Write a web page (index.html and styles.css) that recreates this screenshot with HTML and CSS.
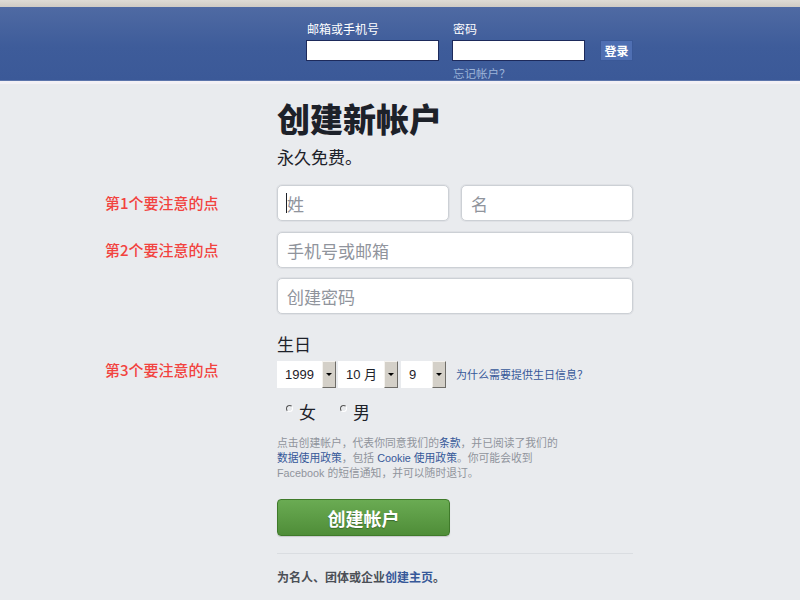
FILE: index.html
```html
<!DOCTYPE html>
<html lang="zh-CN">
<head>
<meta charset="utf-8">
<title>创建新帐户</title>
<link rel="stylesheet" href="styles.css">
</head>
<body>
<div class="topstrip"></div>
<header class="header">
  <div class="login">
    <div class="login-col">
      <label class="login-label">邮箱或手机号</label>
      <input class="login-input" type="text">
    </div>
    <div class="login-col">
      <label class="login-label">密码</label>
      <input class="login-input" type="password">
      <a class="forgot">忘记帐户？</a>
    </div>
    <button class="login-btn">登录</button>
  </div>
</header>
<div class="band"></div>
<main class="main">
  <div class="row">
    <div class="note"></div>
    <div class="content">
      <h1 class="title">创建新帐户</h1>
      <p class="subtitle">永久免费。</p>
    </div>
  </div>
  <div class="row row-name">
    <div class="note">第1个要注意的点</div>
    <div class="content names">
      <div class="field-wrap">
        <input class="field half" type="text" placeholder="姓">
        <span class="caret"></span>
      </div>
      <input class="field half" type="text" placeholder="名">
    </div>
  </div>
  <div class="row row-phone">
    <div class="note">第2个要注意的点</div>
    <div class="content">
      <input class="field" type="text" placeholder="手机号或邮箱">
    </div>
  </div>
  <div class="row row-pass">
    <div class="note"></div>
    <div class="content">
      <input class="field" type="password" placeholder="创建密码">
    </div>
  </div>
  <div class="row row-bday">
    <div class="note"></div>
    <div class="content bday-title">生日</div>
  </div>
  <div class="row row-selects">
    <div class="note note-sel">第3个要注意的点</div>
    <div class="content selects">
      <div class="sel sel-year"><span class="sel-text">1999</span><span class="sel-btn"><span class="tri"></span></span></div>
      <div class="sel sel-month"><span class="sel-text">10 月</span><span class="sel-btn"><span class="tri"></span></span></div>
      <div class="sel sel-day"><span class="sel-text">9</span><span class="sel-btn"><span class="tri"></span></span></div>
      <a class="why">为什么需要提供生日信息？</a>
    </div>
  </div>
  <div class="row row-radio">
    <div class="note"></div>
    <div class="content radios">
      <span class="radio-item"><span class="radio"></span>女</span>
      <span class="radio-item"><span class="radio"></span>男</span>
    </div>
  </div>
  <div class="row row-legal">
    <div class="note"></div>
    <div class="content legal">点击创建帐户，代表你同意我们的<a>条款</a>，并已阅读了我们的<br><a>数据使用政策</a>，包括 <a>Cookie 使用政策</a>。你可能会收到<br>Facebook 的短信通知，并可以随时退订。</div>
  </div>
  <div class="row row-btn">
    <div class="note"></div>
    <div class="content"><button class="create">创建帐户</button></div>
  </div>
  <div class="row row-div">
    <div class="note"></div>
    <div class="content divider"></div>
  </div>
  <div class="row row-foot">
    <div class="note"></div>
    <div class="content foot">为名人、团体或企业<a>创建主页</a>。</div>
  </div>
</main>
</body>
</html>
```

FILE: styles.css
```css
* { box-sizing: border-box; }
html, body {
  margin: 0;
  padding: 0;
  background: #e9ebee;
  font-family: "Liberation Sans", "Noto Sans CJK SC", sans-serif;
  color: #1d2129;
}
.topstrip {
  height: 7px;
  background: linear-gradient(#dedbd5, #cfcbc4);
}
.header {
  height: 74px;
  background: linear-gradient(#4f6aa3, #3e5c9a 55%, #3b5998);
  border-bottom: 1px solid #5b74aa;
}
.band {
  height: 3px;
  background: #f3f1f5;
}
.login {
  display: flex;
  align-items: flex-start;
  padding: 14px 0 0 306px;
}
.login-col {
  display: flex;
  flex-direction: column;
  width: 133px;
  margin-right: 13px;
}
.login-col + .login-col { margin-right: 15px; }
.login-label {
  font-family: "Noto Sans CJK SC", sans-serif;
  font-size: 12px;
  line-height: 16px;
  color: #fff;
  padding-left: 1px;
}
.login-input {
  margin-top: 3px;
  width: 133px;
  height: 21px;
  border: 1px solid #1d2a5b;
  background: #fff;
  padding: 0 3px;
}
.forgot {
  margin-top: 5px;
  font-family: "Noto Sans CJK SC", sans-serif;
  font-size: 11.5px;
  line-height: 14px;
  color: #9cb4d8;
  padding-left: 1px;
}
.login-btn {
  margin-top: 19px;
  width: 33px;
  height: 21px;
  padding: 0;
  border: 1px solid #3a5897;
  background: #4f6fb3;
  color: #fff;
  font-family: "Noto Sans CJK SC", sans-serif;
  font-size: 12px;
  font-weight: bold;
  line-height: 18px;
}
.main {
  padding: 14px 0 0 105px;
}
.row {
  display: flex;
  align-items: center;
}
.note {
  width: 172px;
  flex: none;
  font-family: "Noto Sans CJK SC", sans-serif;
  font-size: 15px;
  font-weight: 500;
  line-height: 20px;
  color: #f2433f;
}
.content { width: 356px; }
.title {
  margin: 0;
  font-family: "Noto Sans CJK SC", sans-serif;
  font-size: 33px;
  line-height: 40px;
  font-weight: 900;
  color: #1d2129;
}
.subtitle {
  margin: 7px 0 0;
  font-family: "Noto Sans CJK SC", sans-serif;
  font-size: 17px;
  line-height: 24px;
  color: #1d2129;
}
.row-name { margin-top: 16px; }
.row-phone { margin-top: 11px; }
.row-pass { margin-top: 10px; }
.names {
  display: flex;
  gap: 12px;
}
.field-wrap {
  position: relative;
  width: 172px;
}
.field {
  display: block;
  width: 356px;
  height: 36px;
  border: 1px solid #ccd0d5;
  border-radius: 5px;
  background: #fff;
  padding: 0 9px;
  font-family: "Noto Sans CJK SC", sans-serif;
  font-size: 17px;
  color: #1d2129;
  box-shadow: 0 0 0 1px #dfe1e5;
  outline: none;
}
.field.half { width: 172px; }
.field::placeholder { color: #90949c; }
.caret {
  position: absolute;
  left: 9px;
  top: 8px;
  width: 1px;
  height: 20px;
  background: #1d2129;
}
.row-bday { margin-top: 19px; }
.bday-title {
  font-family: "Noto Sans CJK SC", sans-serif;
  font-size: 17px;
  line-height: 22px;
}
.row-selects { margin-top: 5px; }
.note-sel { margin-bottom: 8px; }
.selects {
  display: flex;
  align-items: center;
}
.sel {
  display: flex;
  height: 27px;
  background: #fff;
  margin-right: 2px;
}
.sel-year { width: 59px; }
.sel-month { width: 60px; margin-right: 3px; }
.sel-day { width: 45px; margin-right: 10px; }
.sel-text {
  flex: 1;
  padding-left: 8px;
  font-size: 13px;
  line-height: 27px;
  color: #1d2129;
  font-family: "Liberation Sans", "Noto Sans CJK SC", sans-serif;
}
.sel-btn {
  width: 14px;
  height: 27px;
  background: #d4d0c8;
  border-top: 1px solid #f4f2ee;
  border-left: 1px solid #f4f2ee;
  border-right: 1px solid #6f6d68;
  border-bottom: 1px solid #6f6d68;
  display: flex;
  align-items: center;
  justify-content: center;
}
.tri {
  width: 0;
  height: 0;
  border-left: 3px solid transparent;
  border-right: 3px solid transparent;
  border-top: 3px solid #000;
}
.why {
  font-family: "Noto Sans CJK SC", sans-serif;
  font-size: 11px;
  color: #365899;
  line-height: 14px;
}
.row-radio { margin-top: 13px; }
.radios {
  display: flex;
  padding-left: 9px;
  gap: 24px;
  font-family: "Noto Sans CJK SC", sans-serif;
  font-size: 17px;
  line-height: 22px;
}
.radio-item {
  display: flex;
  align-items: center;
}
.radio {
  width: 7px;
  height: 7px;
  border-radius: 50%;
  border-top: 1.5px solid #555;
  border-left: 1.5px solid #555;
  border-right: 1.5px solid #fff;
  border-bottom: 1.5px solid #fff;
  margin: -8px 6px 0 0;
}
.row-legal { margin-top: 13px; }
.legal {
  font-family: "Liberation Sans", "Noto Sans CJK SC", sans-serif;
  font-size: 10.8px;
  line-height: 15px;
  color: #90949c;
}
.legal a { color: #365899; }
.row-btn { margin-top: 18px; }
.create {
  display: block;
  width: 173px;
  height: 37px;
  border: 1px solid #3f7a2a;
  border-radius: 4px;
  background: linear-gradient(#6aab53, #4f8d38);
  color: #fff;
  font-family: "Noto Sans CJK SC", sans-serif;
  font-size: 18px;
  font-weight: bold;
  text-shadow: 0 1px 1px rgba(0,0,0,0.3);
  box-shadow: 0 1px 1px rgba(0,0,0,0.15);
  padding: 0;
}
.row-div { margin-top: 17px; }
.divider {
  height: 1px;
  background: #dadde1;
}
.row-foot { margin-top: 15px; }
.foot {
  font-family: "Noto Sans CJK SC", sans-serif;
  font-size: 12px;
  line-height: 16px;
  font-weight: bold;
  color: #4b4f56;
}
.foot a { color: #365899; }
```
